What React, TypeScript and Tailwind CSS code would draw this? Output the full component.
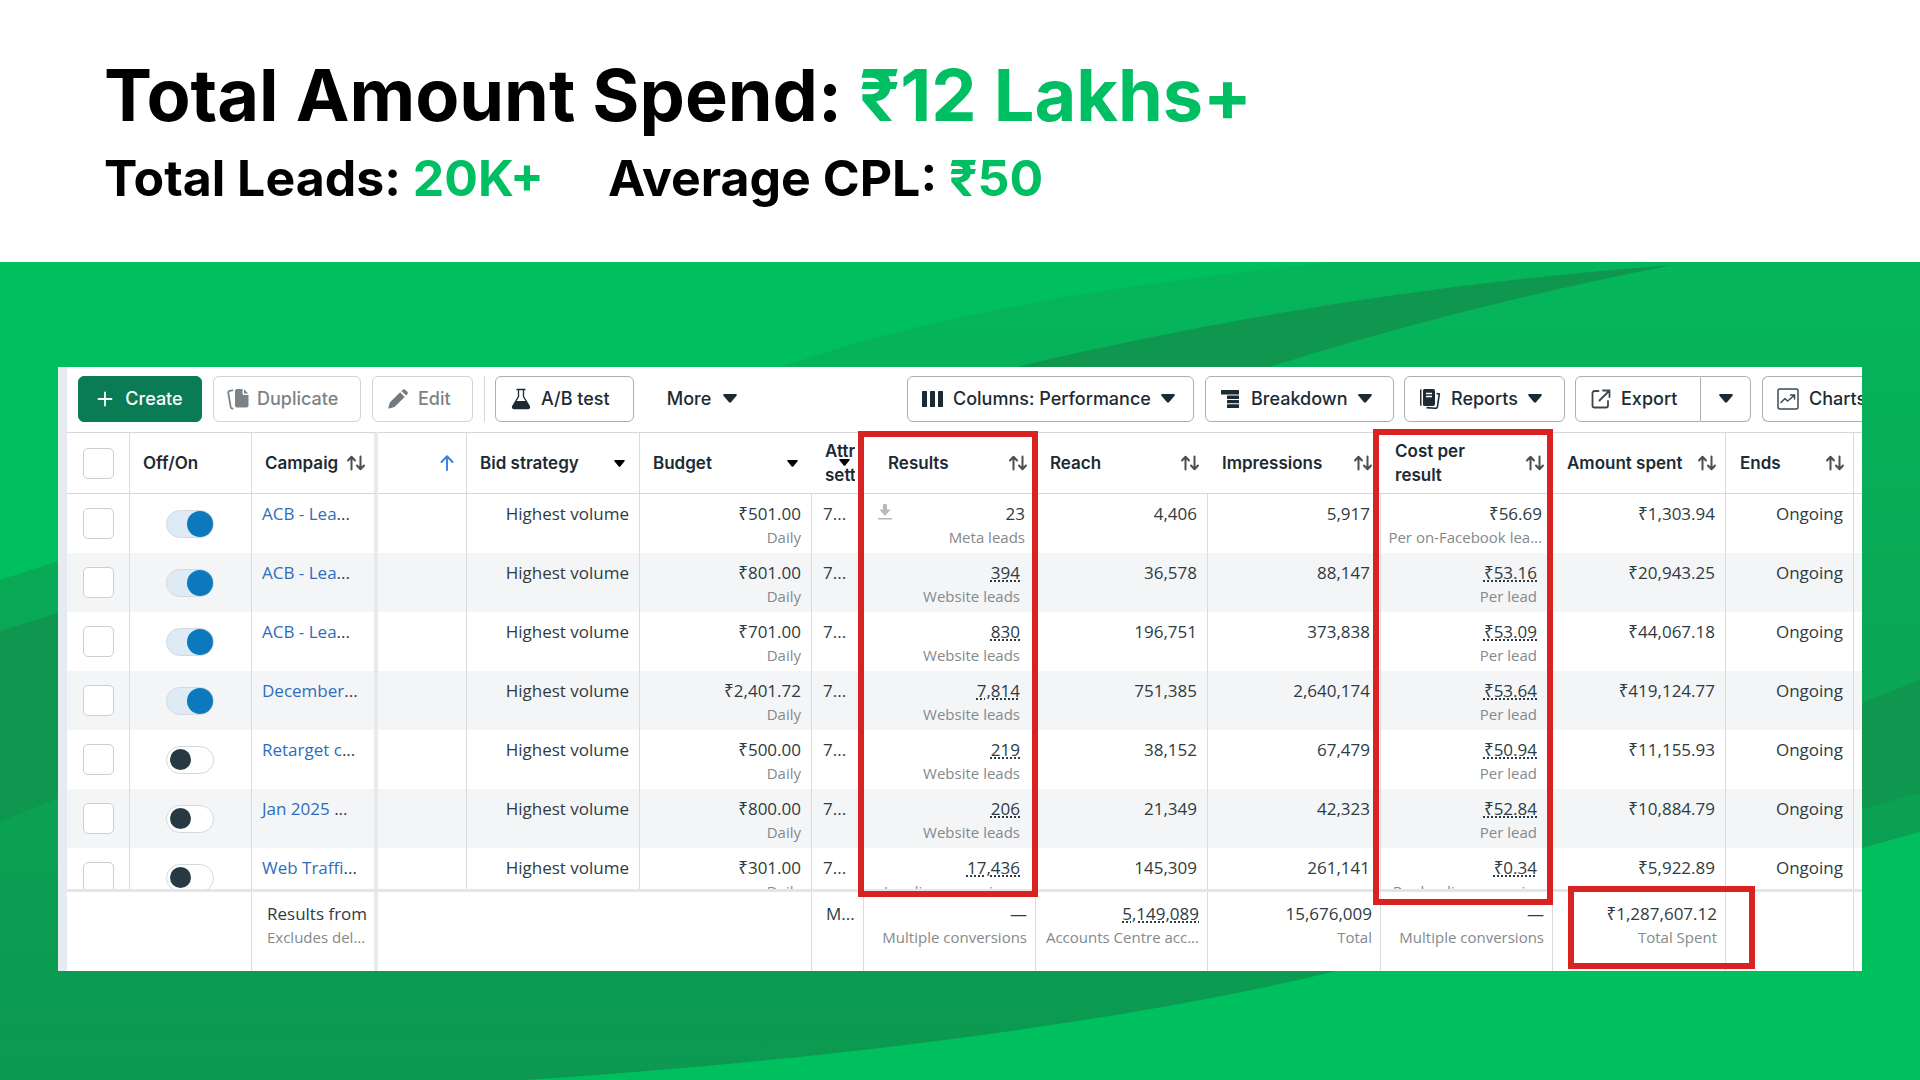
import { useId, useState } from 'react';
import clsx from 'clsx';

type Campaign = {
  name: string;
  on: boolean;
  budget: string;
  results: string;
  resultType: string;
  reach: string;
  impressions: string;
  cost: string;
  costType: string;
  spent: string;
  estimated?: boolean;
};

const CAMPAIGNS: Campaign[] = [
  { name: 'ACB - Lea', on: true, budget: '₹501.00', results: '23', resultType: 'Meta leads', reach: '4,406', impressions: '5,917', cost: '₹56.69', costType: 'Per on-Facebook lea...', spent: '₹1,303.94' },
  { name: 'ACB - Lea', on: true, budget: '₹801.00', results: '394', resultType: 'Website leads', reach: '36,578', impressions: '88,147', cost: '₹53.16', costType: 'Per lead', spent: '₹20,943.25', estimated: true },
  { name: 'ACB - Lea', on: true, budget: '₹701.00', results: '830', resultType: 'Website leads', reach: '196,751', impressions: '373,838', cost: '₹53.09', costType: 'Per lead', spent: '₹44,067.18', estimated: true },
  { name: 'December', on: true, budget: '₹2,401.72', results: '7,814', resultType: 'Website leads', reach: '751,385', impressions: '2,640,174', cost: '₹53.64', costType: 'Per lead', spent: '₹419,124.77', estimated: true },
  { name: 'Retarget c', on: false, budget: '₹500.00', results: '219', resultType: 'Website leads', reach: '38,152', impressions: '67,479', cost: '₹50.94', costType: 'Per lead', spent: '₹11,155.93', estimated: true },
  { name: 'Jan 2025 ', on: false, budget: '₹800.00', results: '206', resultType: 'Website leads', reach: '21,349', impressions: '42,323', cost: '₹52.84', costType: 'Per lead', spent: '₹10,884.79', estimated: true },
  { name: 'Web Traffi', on: false, budget: '₹301.00', results: '17,436', resultType: 'Landing page views', reach: '145,309', impressions: '261,141', cost: '₹0.34', costType: 'Per landing page vi...', spent: '₹5,922.89', estimated: true },
];

function Caret({ className = 'w-3.5 h-[9px]' }: { className?: string }) {
  return (
    <svg viewBox="0 0 14 9" className={clsx('shrink-0', className)} fill="currentColor" aria-hidden="true">
      <path d="M1.2 0h11.6c.9 0 1.3 1 .7 1.7L8 8.3c-.5.6-1.5.6-2 0L.5 1.7C-.1 1 .3 0 1.2 0z" />
    </svg>
  );
}

function SortIcon() {
  return (
    <svg viewBox="0 0 20 16" className="w-5 h-4 shrink-0" fill="none" stroke="#4b4f54" strokeWidth="2" strokeLinecap="round" strokeLinejoin="round" aria-hidden="true">
      <path d="M5.5 14.5V2M2 5.5 5.5 1.7 9 5.5M14.5 1.5V14M11 10.5l3.5 3.8 3.5-3.8" />
    </svg>
  );
}

// Toolbar icons
const PlusIcon = () => (
  <svg viewBox="0 0 16 16" className="size-4" fill="none" stroke="#fff" strokeWidth="1.8" strokeLinecap="round" aria-hidden="true">
    <path d="M8 1.5v13M1.5 8h13" />
  </svg>
);

const DuplicateIcon = () => (
  <svg viewBox="0 0 22 22" className="size-[22px]" fill="#7b8388" aria-hidden="true">
    <path d="M10 1h5.5v4.5A1.5 1.5 0 0 0 17 7h4.5v10.5A2 2 0 0 1 19.5 19.5H10a2 2 0 0 1-2-2V3a2 2 0 0 1 2-2z" />
    <path d="M17 1.3 21.2 5.5H17z" />
    <path d="M5.5 2.3 2.7 2.8C1.7 3 1.1 3.9 1.3 4.9l2.4 14.2c.2 1 1 1.6 2 1.4" fill="none" stroke="#7b8388" strokeWidth="1.8" strokeLinecap="round" />
  </svg>
);

const PencilIcon = () => (
  <svg viewBox="0 0 20 20" className="size-5" fill="#737b81" aria-hidden="true">
    <path d="M12.1 3.3 16.7 7.9 6.5 18.1 1.2 19.5a.7.7 0 0 1-.8-.8L1.8 13.5zM13.5 1.9l1-1a2 2 0 0 1 2.9 0l1.7 1.7a2 2 0 0 1 0 2.9l-1 1z" />
  </svg>
);

const FlaskIcon = () => (
  <svg viewBox="0 0 20 22" className="w-5 h-[22px]" aria-hidden="true">
    <path d="M6 1.5h8M7.5 1.5v7L1.8 18c-.8 1.4 0 2.7 1.5 2.7h13.4c1.5 0 2.3-1.3 1.5-2.7L12.5 8.5v-7" fill="none" stroke="#1c2b33" strokeWidth="1.3" strokeLinecap="round" />
    <path d="M5 13h10l3.3 5.3c.7 1.3 0 2.5-1.5 2.5H3.2c-1.5 0-2.2-1.2-1.5-2.5z" fill="#1c2b33" />
  </svg>
);

const ColumnsIcon = () => (
  <svg viewBox="0 0 21 16" className="w-[21px] h-4" fill="#1c2b33" aria-hidden="true">
    <rect width="5" height="16" rx=".6" />
    <rect x="8" width="5" height="16" rx=".6" />
    <rect x="16" width="5" height="16" rx=".6" />
  </svg>
);

const BreakdownIcon = () => (
  <svg viewBox="0 0 20 18" className="w-5 h-[18px]" fill="#1c2b33" aria-hidden="true">
    <rect width="18" height="4.5" rx=".6" />
    <rect x="6" y="5.5" width="12" height="3.5" rx=".5" />
    <rect x="6" y="10" width="12" height="3.2" rx=".5" />
    <rect x="6" y="14.3" width="12" height="3.7" rx=".5" />
  </svg>
);

const ReportsIcon = () => (
  <svg viewBox="0 0 22 22" className="size-[22px]" fill="#1c2b33" aria-hidden="true">
    <path d="M1 2.5A1.5 1.5 0 0 1 2.5 1v17A1.5 1.5 0 0 1 1 16.5z" />
    <path d="M5.5 1H14a2 2 0 0 1 2 2v13a2 2 0 0 1-2 2H5.5A1.5 1.5 0 0 1 4 16.5v-14A1.5 1.5 0 0 1 5.5 1z" />
    <path d="M7 5.5h6M7 8.5h6" stroke="#fff" strokeWidth="1.3" />
    <path d="M17.5 5.5 20.3 6 18.5 18.5c-.2 1.3-1.2 2-2.5 1.8L7.5 19.6" fill="none" stroke="#1c2b33" strokeWidth="1.6" />
  </svg>
);

const ExportIcon = () => (
  <svg viewBox="0 0 20 20" className="size-5" fill="none" stroke="#3c484f" strokeWidth="1.8" strokeLinecap="round" strokeLinejoin="round" aria-hidden="true">
    <path d="M7.5 2H3.5A2 2 0 0 0 1.5 4v12.5a2 2 0 0 0 2 2H15a2 2 0 0 0 2-2V12" />
    <path d="M12 1.5h6.5V8M18 2 8.5 11.5" />
  </svg>
);

const ChartsIcon = () => (
  <svg viewBox="0 0 22 22" className="size-[22px] shrink-0" fill="none" stroke="#3c484f" strokeWidth="1.5" strokeLinejoin="round" strokeLinecap="round" aria-hidden="true">
    <rect x="1" y="1" width="20" height="20" rx="2" />
    <path d="M4 14.5 8 10.5l2.5 2.5 2-1.5L17 7.5M13.5 7H17.500v4" />
  </svg>
);

function ToolButton({ className, children }: { className?: string; children: React.ReactNode }) {
  return (
    <button
      type="button"
      className={clsx('h-[46px] shrink-0 flex items-center rounded-md border text-lg font-medium whitespace-nowrap', className)}
    >
      {children}
    </button>
  );
}

function Toolbar() {
  return (
    <div className="flex items-center h-[65px] pb-0.5 pl-[11px] text-[#1c2b33] font-['Inter',sans-serif]">
      <ToolButton className="w-[124px] justify-center gap-3 border-[#0a7c55] bg-[#0a7c55] text-white">
        <PlusIcon /> Create
      </ToolButton>
      <ToolButton className="ml-[11px] w-[148px] pl-[13px] gap-2 border-[#cfd3d6] text-[#7b8388]">
        <DuplicateIcon /> Duplicate
      </ToolButton>
      <ToolButton className="ml-[11px] w-[101px] pl-[15px] gap-2.5 border-[#cfd3d6] text-[#7b8388]">
        <PencilIcon /> Edit
      </ToolButton>
      <span className="ml-[11px] mr-[10px] h-[46px] w-px bg-[#d5d8da]" />
      <ToolButton className="w-[139px] pl-[15px] gap-2.5 border-[#a9b0b5]">
        <FlaskIcon /> A/B test
      </ToolButton>
      <ToolButton className="ml-[10px] w-[116px] justify-center gap-3 border-transparent">
        More <Caret />
      </ToolButton>
      <ToolButton className="ml-auto w-[287px] pl-3.5 gap-2.5 border-[#a9b0b5]">
        <ColumnsIcon /> Columns: Performance <Caret />
      </ToolButton>
      <ToolButton className="ml-[11px] w-[189px] pl-[15px] gap-2.5 border-[#a9b0b5]">
        <BreakdownIcon /> Breakdown <Caret />
      </ToolButton>
      <ToolButton className="ml-[10px] w-[161px] pl-3.5 gap-2.5 border-[#a9b0b5]">
        <ReportsIcon /> Reports <Caret />
      </ToolButton>
      <ToolButton className="ml-[10px] w-[126px] pl-[15px] gap-2.5 rounded-r-none border-[#a9b0b5]">
        <ExportIcon /> Export
      </ToolButton>
      <ToolButton className="w-[50px] justify-center rounded-l-none border-l-0 border-[#a9b0b5]">
        <Caret />
      </ToolButton>
      <ToolButton className="ml-[11px] w-[100px] rounded-r-none border-r-0 border-[#a9b0b5] pl-3.5 gap-2.5 overflow-hidden">
        <ChartsIcon /> Charts
      </ToolButton>
    </div>
  );
}

function Toggle({ defaultOn, label }: { defaultOn: boolean; label: string }) {
  const [on, setOn] = useState(defaultOn);
  const id = useId();
  return (
    <label htmlFor={id} className={clsx('relative flex items-center w-12 h-7 rounded-full border border-[#d3dade]', on ? 'bg-[#deebf5] justify-end' : 'bg-white pl-[3px]')}>
      <input id={id} type="checkbox" role="switch" aria-label={label} checked={on} onChange={() => setOn(!on)} className="sr-only" />
      <span className={clsx('rounded-full', on ? 'size-[26px] bg-[#0c78be]' : 'size-[21px] bg-[#283943]')} />
    </label>
  );
}

function Check({ label }: { label: string }) {
  return (
    <input type="checkbox" aria-label={label} className="block size-[31px] appearance-none rounded-[5px] border border-[#cbcfd2] bg-white checked:bg-[#0c78be]" />
  );
}

function Columns() {
  return (
    <colgroup>
      <col className="w-[63px]" />
      <col className="w-[122px]" />
      <col className="w-[126px]" />
      <col className="w-[89px]" />
      <col className="w-[173px]" />
      <col className="w-[172px]" />
      <col className="w-[52px]" />
      <col className="w-[172px]" />
      <col className="w-[172px]" />
      <col className="w-[173px]" />
      <col className="w-[172px]" />
      <col className="w-[173px]" />
      <col className="w-[128px]" />
      <col />
    </colgroup>
  );
}

function Head({ children, icon, className }: { children?: React.ReactNode; icon?: React.ReactNode; className?: string }) {
  return (
    <th scope="col" className={clsx('p-0 text-left font-semibold', className)}>
      <div className="flex items-center justify-between">
        <span>{children}</span>
        {icon}
      </div>
    </th>
  );
}

function Value({ children, dotted }: { children: React.ReactNode; dotted?: boolean }) {
  return (
    <div className="leading-[27px]">
      <span className={clsx(dotted && 'underline decoration-dotted decoration-2 underline-offset-1')}>{children}</span>
    </div>
  );
}

function Note({ children }: { children: React.ReactNode }) {
  return <div className="text-[15px] leading-5 text-[#85898c] whitespace-nowrap">{children}</div>;
}

function Metric({ value, note, dotted, className = 'pt-1.5' }: { value: string; note?: string; dotted?: boolean; className?: string }) {
  return (
    <td className={clsx('text-right align-top whitespace-nowrap', className)}>
      <Value dotted={dotted}>{value}</Value>
      {note && <Note>{note}</Note>}
    </td>
  );
}

const LINE = 'border-r border-[#dadcde]';
const PIN = 'border-r-4 border-[#e9eaeb]';

function CampaignTable() {
  return (
    <div className="h-[460px] overflow-hidden border-b-[3px] border-[#e4e5e6]">
      <table className="w-full table-fixed border-separate border-spacing-0 text-[17px] text-[#2f3b42]">
        <Columns />
        <thead className="font-['Inter',sans-serif] leading-6 text-[#1c2b33] [&_th]:border-y [&_th]:border-y-[#d5d7d9]">
          <tr className="h-[62px]">
            <th scope="col" className={clsx('p-0 pl-4', LINE)}><Check label="Select all campaigns" /></th>
            <Head className={clsx('pl-[13px]', LINE)}>Off/On</Head>
            <Head className={clsx('pl-[13px] pr-2', PIN)} icon={<SortIcon />}>Campaig</Head>
            <Head
              className={clsx('pr-3', LINE)}
              icon={
                <svg viewBox="0 0 14 16" className="w-3.5 h-4" fill="none" stroke="#3b82e6" strokeWidth="2" strokeLinecap="round" strokeLinejoin="round" aria-hidden="true">
                  <path d="M7 15V1.5M1.5 7 7 1.3 12.5 7" />
                </svg>
              }
            />
            <Head className={clsx('pl-[13px] pr-3.5', LINE)} icon={<Caret className="w-[11px] h-[7px] text-black" />}>Bid strategy</Head>
            <Head className="pl-[13px] pr-3.5" icon={<Caret className="w-[11px] h-[7px] text-black" />}>Budget</Head>
            <th scope="col" className="p-0 pl-[13px] text-left font-semibold">
              <div className="relative w-[30px] overflow-hidden">
                Attri<br />settin
                <Caret className="absolute left-3.5 top-5 w-[11px] h-[7px] text-black" />
              </div>
            </th>
            <Head className="pl-6 pr-2" icon={<SortIcon />}>Results</Head>
            <Head className="pl-3.5 pr-2" icon={<SortIcon />}>Reach</Head>
            <Head className="pl-3.5 pr-2" icon={<SortIcon />}>Impressions</Head>
            <Head className="pl-3.5 pr-2" icon={<SortIcon />}>Cost per<br />result</Head>
            <Head className={clsx('pl-3.5 pr-2 whitespace-nowrap', LINE)} icon={<SortIcon />}>Amount spent</Head>
            <Head className={clsx('pl-3.5 pr-2', LINE)} icon={<SortIcon />}>Ends</Head>
            <th className="p-0" />
          </tr>
        </thead>
        <tbody>
          {CAMPAIGNS.map((c, i) => (
            <tr key={i} className="h-[59px] even:bg-[#f4f5f7]">
              <td className={clsx('p-0 pl-4', LINE)}><Check label={`Select ${c.name}`} /></td>
              <td className={clsx('p-0 pl-9', LINE)}><Toggle defaultOn={c.on} label={`${c.name} off/on`} /></td>
              <td className={clsx('pt-1.5 pl-2.5 align-top whitespace-nowrap', PIN)}>
                <Value><a href="#" className="text-[#2f6dbb]">{c.name}</a>...</Value>
              </td>
              <td className={LINE} />
              <Metric value="Highest volume" className={clsx('pt-1.5 pr-2.5', LINE)} />
              <Metric value={c.budget} note="Daily" className={clsx('pt-1.5 pr-2.5', LINE)} />
              <td className={clsx('pt-1.5 pl-[11px] align-top', LINE)}><Value>7...</Value></td>
              <td className={clsx('pt-1.5 align-top', LINE)}>
                <div className="flex">
                  {i === 0 && (
                    <svg viewBox="0 0 14 16" className="ml-3.5 mt-1 w-3.5 h-4 shrink-0" fill="#b3b9bd" aria-hidden="true">
                      <path d="M5 1a1 1 0 0 1 1-1h2a1 1 0 0 1 1 1v4.5h3.5L7 12 1.5 5.5H5zM0 14h14v1.5H0z" />
                    </svg>
                  )}
                  <div className={clsx('flex-1 text-right', c.estimated ? 'pr-[15px]' : 'pr-2.5')}>
                    <Value dotted={c.estimated}>{c.results}</Value>
                    <Note>{c.resultType}</Note>
                  </div>
                </div>
              </td>
              <Metric value={c.reach} className={clsx('pt-1.5 pr-2.5', LINE)} />
              <Metric value={c.impressions} className={clsx('pt-1.5 pr-2.5', LINE)} />
              <Metric value={c.cost} note={c.costType} dotted={c.estimated} className={clsx('pt-1.5', c.estimated ? 'pr-[15px]' : 'pr-2.5', LINE)} />
              <Metric value={c.spent} className={clsx('pt-1.5 pr-2.5', LINE)} />
              <Metric value="Ongoing" className={clsx('pt-1.5 pr-2.5', LINE)} />
              <td />
            </tr>
          ))}
        </tbody>
      </table>
    </div>
  );
}

function TotalsTable() {
  const cell = clsx('pt-2 pr-2', LINE);
  return (
    <table className="w-full table-fixed border-separate border-spacing-0 text-[17px] text-[#2f3b42]">
      <Columns />
      <tbody>
        <tr className="h-[79px]">
          <td />
          <td className={LINE} />
          <td className={clsx('pt-2 pl-[15px] align-top whitespace-nowrap', PIN)}>
            <Value>Results from</Value>
            <Note>Excludes del...</Note>
          </td>
          <td />
          <td />
          <td className={LINE} />
          <td className={clsx('pt-2 pl-3.5 align-top', LINE)}><Value>M...</Value></td>
          <Metric value="—" note="Multiple conversions" className={cell} />
          <Metric value="5,149,089" note="Accounts Centre acc..." dotted className={cell} />
          <Metric value="15,676,009" note="Total" className={cell} />
          <Metric value="—" note="Multiple conversions" className={cell} />
          <Metric value="₹1,287,607.12" note="Total Spent" className={cell} />
          <td className={LINE} />
          <td />
        </tr>
      </tbody>
    </table>
  );
}

function Backdrop() {
  return (
    <svg viewBox="0 0 1920 818" preserveAspectRatio="none" className="absolute inset-0 size-full" aria-hidden="true">
      <defs>
        <linearGradient id="sweep" gradientUnits="userSpaceOnUse" x1="0" y1="0" x2="0" y2="818">
          <stop offset="0" stopColor="#05b65b" />
          <stop offset=".5" stopColor="#0aa655" />
          <stop offset="1" stopColor="#0c9850" />
        </linearGradient>
      </defs>
      <rect width="1920" height="818" fill="#00bf5f" />
      <path d="M0 318 58 299C350 220 560 200 784 104C950 45 1150 20 1330 0H1920V570L1862 586C1500 680 1400 690 1333 710C1100 765 800 800 525 818H0z" fill="url(#sweep)" />
      <path d="M0 369 58 351C400 260 800 200 1020 104C1200 38 1450 26 1672 3C1530 50 1390 60 1272 104C900 300 400 420 58 536L0 560z" fill="none" />
      <path d="M0 369 58 351C400 260 800 200 1020 104Q1340 28 1672 3Q1460 45 1272 104C900 300 400 420 58 536L0 560z" fill="#0f964f" />
      <path d="M1920 418 1862 441C1600 520 1400 580 1200 600H1600L1862 547 1920 531z" fill="#0f964f" />
    </svg>
  );
}

export default function App() {
  return (
    <div className="flex min-h-screen flex-col bg-white font-['Open_Sans','Noto_Sans',sans-serif]">
      <header className="h-[262px] pl-[104px] pt-[50px] font-['Inter',sans-serif] font-bold text-black">
        <h1 className="text-[72px] leading-[90px]">
          Total Amount Spend: <span className="text-[#00bf63]">₹12 Lakhs+</span>
        </h1>
        <p className="flex gap-16 text-[50px] leading-[76px]">
          <span>Total Leads: <span className="text-[#00bf63]">20K+</span></span>
          <span>Average CPL: <span className="text-[#00bf63]">₹50</span></span>
        </p>
      </header>

      <main className="relative flex-1 px-[58px] pt-[105px] pb-[108px]">
        <Backdrop />
        <section className="relative overflow-hidden border-l-[9px] border-[#e6ebf2] bg-white">
          <Toolbar />
          <CampaignTable />
          <TotalsTable />
          {/* Highlight boxes */}
          <div className="pointer-events-none absolute left-[791px] top-16 h-[466px] w-[180px] border-[6px] border-[#d92323]" />
          <div className="pointer-events-none absolute left-[1306px] top-[62px] h-[476px] w-[180px] border-[6px] border-[#d92323]" />
          <div className="pointer-events-none absolute left-[1501px] top-[519px] h-[83px] w-[187px] border-[6px] border-[#d92323]" />
        </section>
      </main>
    </div>
  );
}
